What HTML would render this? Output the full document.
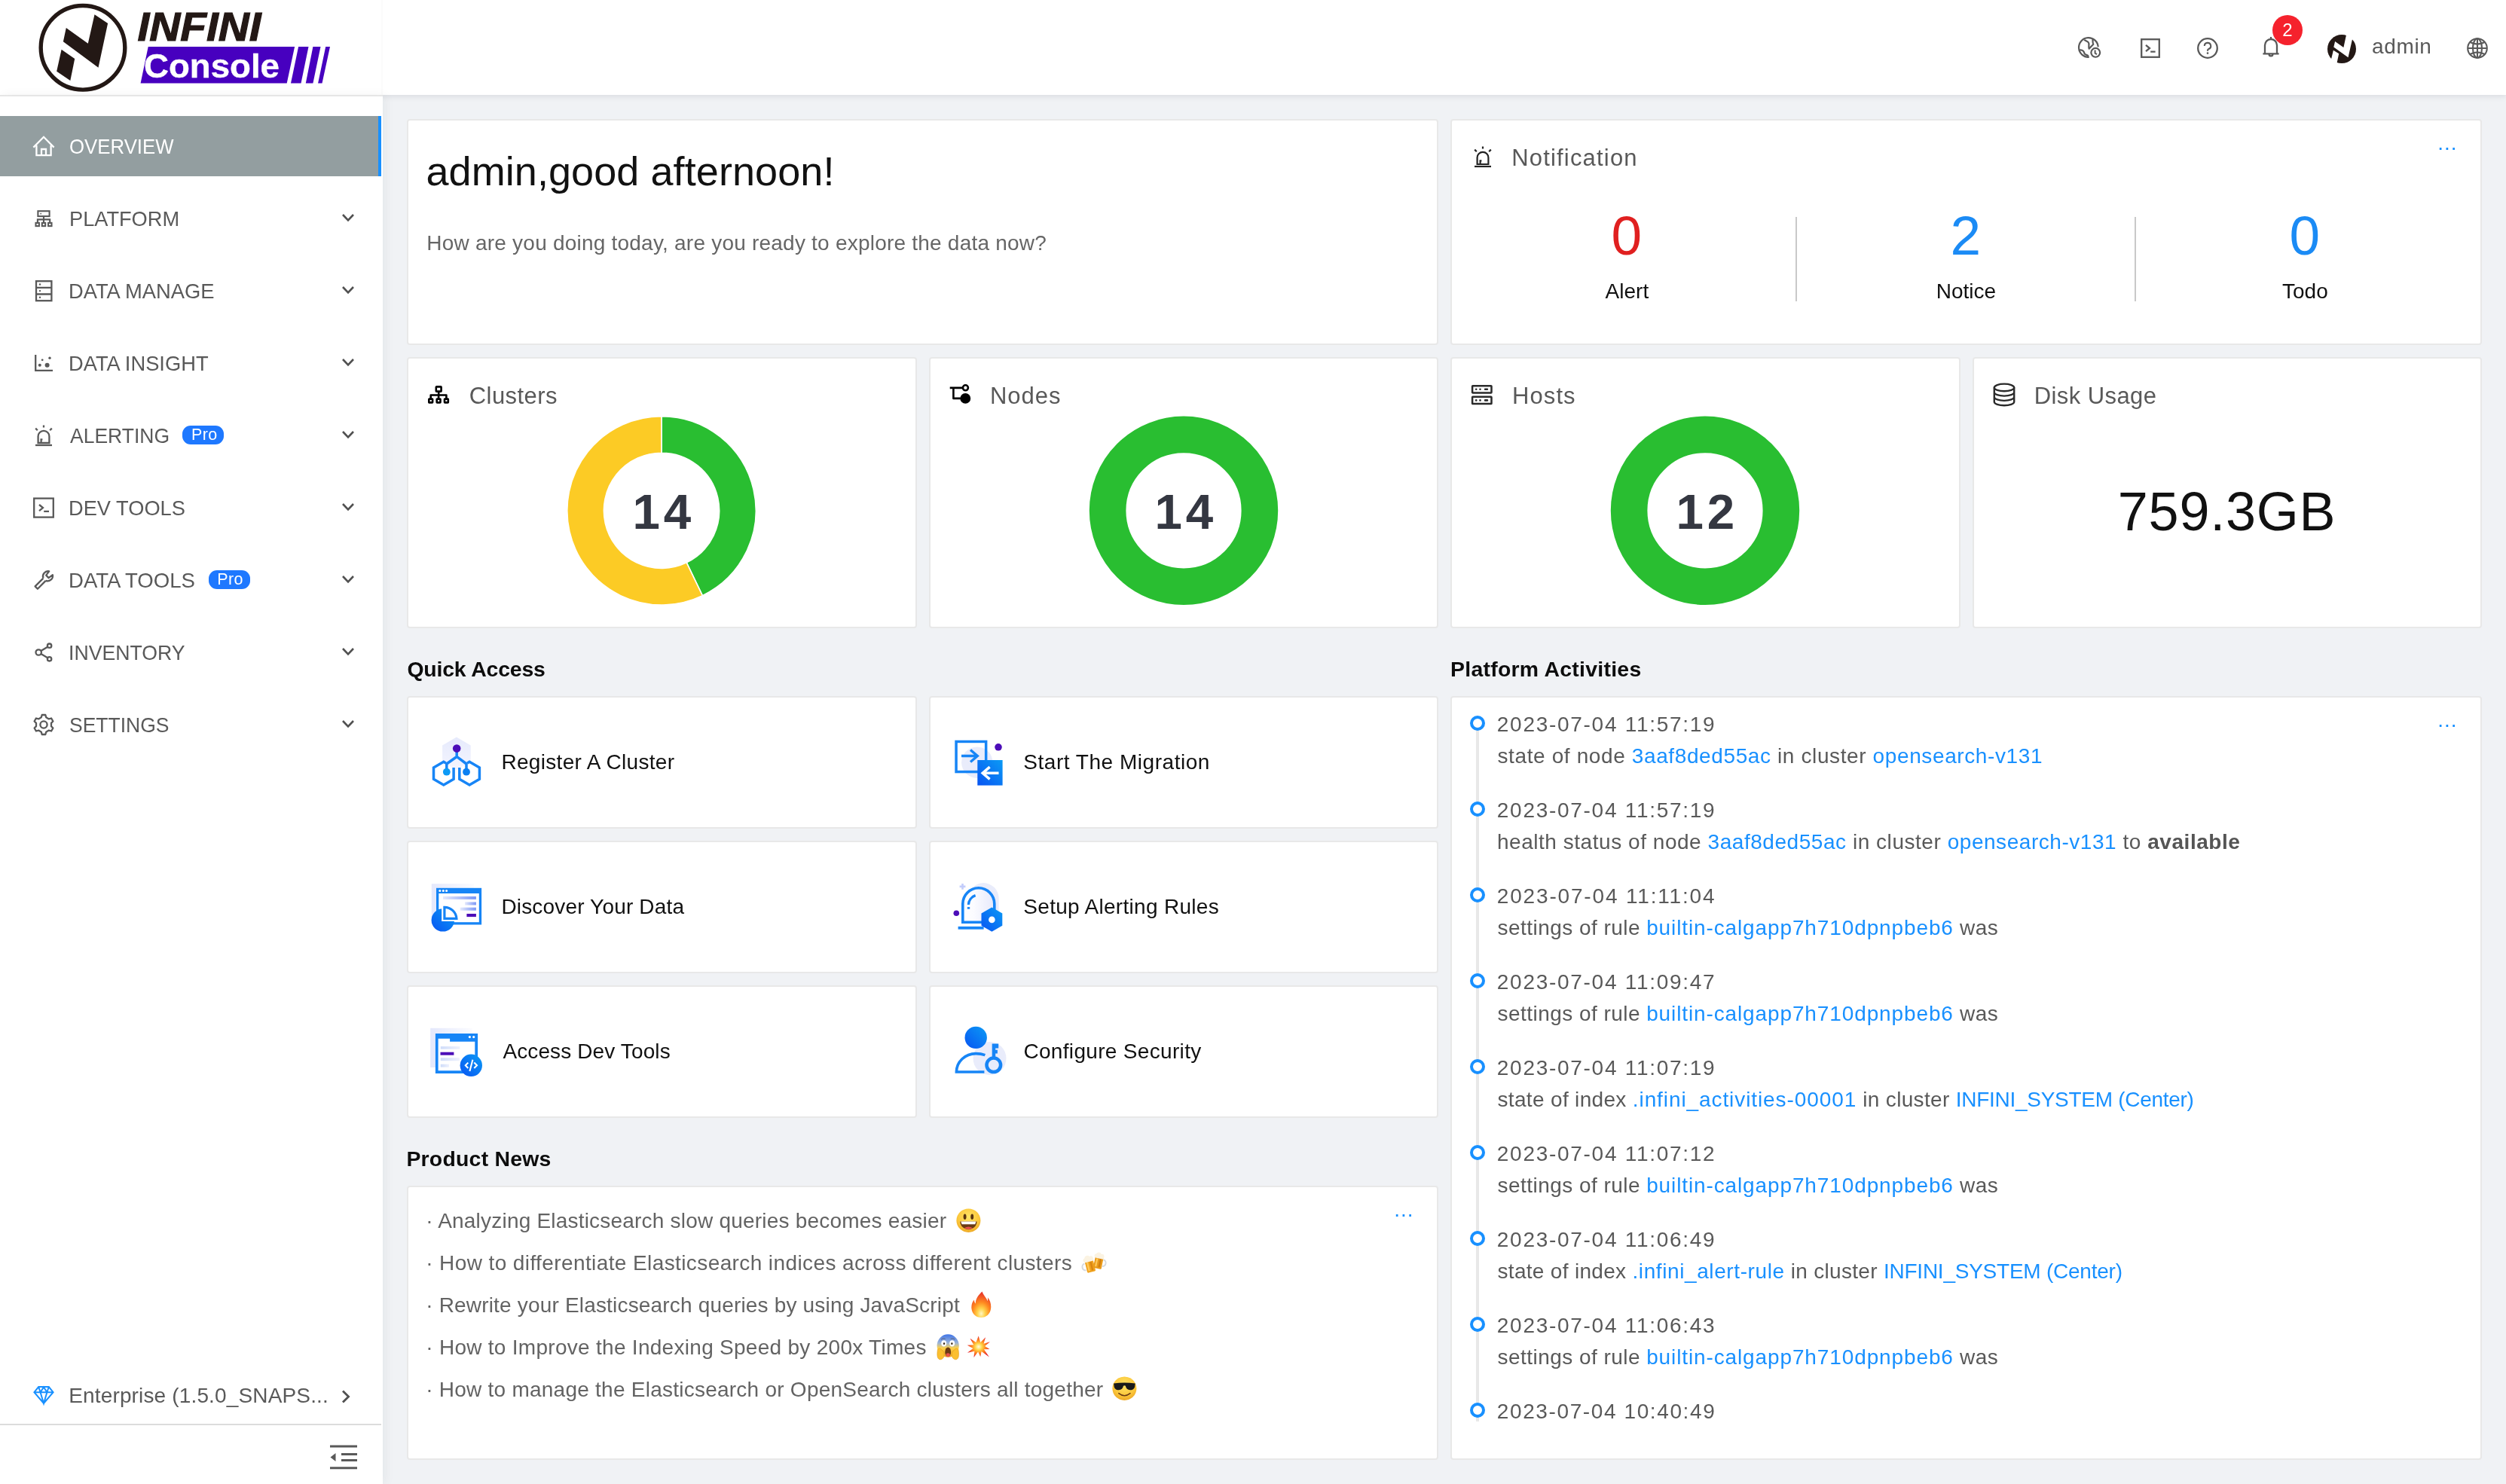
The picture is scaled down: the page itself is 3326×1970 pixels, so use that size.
<!DOCTYPE html>
<html lang="en">
<head>
<meta charset="utf-8">
<title>INFINI Console</title>
<style>
*{box-sizing:border-box;margin:0;padding:0}
html,body{width:3326px;height:1970px;overflow:hidden;background:#f0f2f5;font-family:"Liberation Sans","DejaVu Sans",sans-serif;color:#595959;font-size:28px}
.abs{position:absolute}
#head,#side,#main{will-change:transform}
#head{position:absolute;left:0;top:0;width:3326px;height:126px;background:#fff;box-shadow:0 2px 8px rgba(0,21,41,.10);z-index:5}
#side{position:absolute;left:0;top:126px;width:508px;height:1844px;background:#fff;box-shadow:4px 0 12px rgba(29,35,41,.05);z-index:6}
#logo{position:absolute;left:0;top:0;width:508px;height:126px;background:#fff;border-right:2px solid #fbfbfb}
#side::before{content:"";position:absolute;left:0;top:0;width:508px;height:2px;background:#e6e6e6}
.mi{position:absolute;left:0;width:506px;height:80px}
.mi.on{background:#939ea0;border-right:4px solid #1890ff;color:#fff}
.mi svg.ic{position:absolute;left:44px;top:26px;width:28px;height:28px;overflow:visible}
.mi .t{transform-origin:0 50%;position:absolute;left:93px;top:1px;line-height:80px;font-size:28px;white-space:nowrap;color:#595959}
.mi.on .t{color:#fff}
.mi svg.ch{position:absolute;left:453px;top:33px;width:18px;height:12px}
.pro{position:absolute;top:27.3px;width:55px;height:25.2px;line-height:25.6px;text-align:center;padding-left:3px;border-radius:11px;background:#1e78ff;color:#fff;font-size:21.5px;letter-spacing:0.4px}
.card{position:absolute;background:#fff;border:2px solid #e8e8e8;border-radius:4px}
.ct{position:absolute;left:80px;top:28px;font-size:32px;line-height:44px;color:#595959;white-space:nowrap}
.cic{position:absolute;left:24px;top:34px;width:32px;height:32px;overflow:visible}
.h2{position:absolute;font-size:28px;font-weight:700;color:#111;line-height:40px;white-space:nowrap}
.qa .qt{position:absolute;left:125px;top:0;line-height:172px;font-size:28px;color:#141414;white-space:nowrap}
.qa svg{position:absolute;left:30px;top:52px;width:70px;height:70px;overflow:visible}
a{color:#1890ff;text-decoration:none}
.more{font-size:28px;color:#1890ff;letter-spacing:0.97px}
.news{position:absolute;left:24px;font-size:28px;line-height:56px;color:#666;white-space:nowrap}
.em{display:inline-block;position:relative;width:36px;height:36px;vertical-align:middle;margin:-6px 0 0 6px;font-size:0}
.em svg{position:absolute;left:0;top:0;width:36px;height:36px;overflow:visible}
.tl{position:absolute;left:32px;width:1200px;height:114px}
.tl .dot{position:absolute;left:-8px;top:0;width:20px;height:20px;border:4px solid #1890ff;border-radius:50%;background:#fff}
.tl .ts{position:absolute;left:27px;top:-14px;line-height:44px;font-size:28px;letter-spacing:1.5px;color:#595959;white-space:nowrap}
.tl .tx{position:absolute;left:27px;top:28px;line-height:44px;font-size:28px;color:#595959;white-space:nowrap}
.tl b{color:#555}
.t1{position:absolute;line-height:1;white-space:nowrap}
.ctr{transform:translateX(-50%)}
.em2{position:absolute;font-size:0;line-height:0;overflow:visible}
.em2 svg{position:absolute;left:0;top:0;width:100%;height:100%;overflow:visible}
.dot{position:absolute;width:20px;height:20px;border:4px solid #1890ff;border-radius:50%;background:#fff}
.ts{font-size:28px;color:#595959;letter-spacing:1.5px}
.tx{font-size:28px;color:#595959}
.tx b{color:#555}
.nn{position:absolute;width:300px;text-align:center;font-size:72px;line-height:80px}
.nl{position:absolute;width:300px;text-align:center;font-size:28px;line-height:40px;color:#111}
</style>







<style id="fit">#w1{letter-spacing:0.080px;margin-left:-0.60px}#w2{letter-spacing:0.220px;margin-left:-0.20px}#n0{letter-spacing:1.182px;margin-left:-2.20px}#c0{letter-spacing:0.458px;margin-left:-0.80px}#c1{letter-spacing:1.000px;margin-left:-2.60px}#c2{letter-spacing:1.050px;margin-left:-1.40px}#c3{letter-spacing:0.420px;margin-left:-1.80px}#dsk{letter-spacing:0.733px;margin-left:-0.40px}#h1{letter-spacing:-0.162px;margin-left:-0.60px}#h2{letter-spacing:0.237px;margin-left:-1.60px}#h3{letter-spacing:0.278px;margin-left:-1.00px}#q0{letter-spacing:0.325px;margin-left:-1.90px}#q1{letter-spacing:0.528px;margin-left:-2.00px}#q2{letter-spacing:0.170px;margin-left:-1.90px}#q3{letter-spacing:0.300px;margin-left:-2.00px}#q4{letter-spacing:0.121px;margin-left:0.10px}#q5{letter-spacing:0.324px;margin-left:-1.90px}#p0{letter-spacing:0.206px;margin-left:-0.40px}#p1{letter-spacing:0.399px;margin-left:-0.40px}#p2{letter-spacing:0.178px;margin-left:-0.40px}#p3{letter-spacing:0.285px;margin-left:-0.40px}#p4{letter-spacing:0.243px;margin-left:-0.40px}#tx0{letter-spacing:0.613px;margin-left:-0.10px}#tx1{letter-spacing:0.541px;margin-left:-0.70px}#tx2{letter-spacing:0.457px;margin-left:-0.10px}#tx3{letter-spacing:0.457px;margin-left:-0.10px}#tx4{letter-spacing:0.332px;margin-left:-0.10px}#tx5{letter-spacing:0.457px;margin-left:-0.10px}#tx6{letter-spacing:0.307px;margin-left:-0.10px}#tx7{letter-spacing:0.457px;margin-left:-0.10px}#adm{letter-spacing:0.600px;margin-left:-0.90px}#ts0{letter-spacing:1.716px;margin-left:-0.20px}#ts1{letter-spacing:1.716px;margin-left:-0.20px}#ts2{letter-spacing:1.827px;margin-left:-0.20px}#ts3{letter-spacing:1.716px;margin-left:-0.20px}#ts4{letter-spacing:1.716px;margin-left:-0.20px}#ts5{letter-spacing:1.716px;margin-left:-0.20px}#ts6{letter-spacing:1.716px;margin-left:-0.20px}#ts7{letter-spacing:1.716px;margin-left:-0.20px}#ts8{letter-spacing:1.605px;margin-left:-0.20px}#ent{letter-spacing:0.152px;margin-left:-1.80px}#m0{transform:scaleX(0.9213);margin-left:-0.70px}#m1{transform:scaleX(0.9712);margin-left:-1.30px}#m2{transform:scaleX(0.9763);margin-left:-2.00px}#m3{transform:scaleX(0.9752);margin-left:-2.00px}#m4{transform:scaleX(0.9468);margin-left:-0.10px}#m5{transform:scaleX(0.9728);margin-left:-2.10px}#m6{transform:scaleX(0.9839);margin-left:-2.10px}#m7{transform:scaleX(0.9526);margin-left:-2.10px}#m8{transform:scaleX(0.9464);margin-left:-1.10px}</style>
</head>
<body>
<!-- SIDEBAR -->
<div id="side">
<div id="menu">
<div class="mi on" style="top:28px"><svg class="ic" viewBox="0 0 28 28" fill="none" stroke="#fff" color="#fff" stroke-width="2.3"><path d="M0.4,15.6 L14,1.8 L27.6,15.6"/><path d="M4.4,13 V26.2 H23.6 V13"/><path d="M11,26.2 V18 H17 V26.2"/></svg><span class="t" id="m0">OVERVIEW</span></div>
<div class="mi" style="top:124px"><svg class="ic" viewBox="0 0 28 28" fill="none" stroke="#595959" color="#595959" stroke-width="2.3"><g stroke-width="2.1"><rect x="6.4" y="4.2" width="15.2" height="6.9"/><circle cx="10.2" cy="7.7" r="0.9" fill="currentColor" stroke="none"/><path d="M14,11.2 V15.4 M5.9,19.6 V15.4 H22.2 V19.6 M14,15.4 V19.6"/><rect x="3.5" y="19.9" width="4.4" height="4.2"/><rect x="11.8" y="19.9" width="4.4" height="4.2"/><rect x="20.1" y="19.9" width="4.4" height="4.2"/></g></svg><span class="t" id="m1">PLATFORM</span><svg class="ch" viewBox="0 0 18 12" fill="none" stroke="#505050" stroke-width="2.6"><path d="M2,2 L9,9.4 L16,2"/></svg></div>
<div class="mi" style="top:220px"><svg class="ic" viewBox="0 0 28 28" fill="none" stroke="#595959" color="#595959" stroke-width="2.3"><rect x="4" y="1.2" width="20.4" height="26"/><path d="M4,9.8 H24.4 M4,18.5 H24.4"/><circle cx="9" cy="5.5" r="1.2" fill="currentColor" stroke="none"/><circle cx="9" cy="14.1" r="1.2" fill="currentColor" stroke="none"/><circle cx="9" cy="22.8" r="1.2" fill="currentColor" stroke="none"/></svg><span class="t" id="m2">DATA MANAGE</span><svg class="ch" viewBox="0 0 18 12" fill="none" stroke="#505050" stroke-width="2.6"><path d="M2,2 L9,9.4 L16,2"/></svg></div>
<div class="mi" style="top:316px"><svg class="ic" viewBox="0 0 28 28" fill="none" stroke="#595959" color="#595959" stroke-width="2.3"><path d="M3.2,3 V23.8 H26"/><g fill="currentColor" stroke="none"><circle cx="8.8" cy="16.8" r="2"/><circle cx="12.2" cy="9.8" r="1.4"/><circle cx="18.6" cy="16.8" r="3"/><circle cx="22" cy="7.2" r="1.7"/></g></svg><span class="t" id="m3">DATA INSIGHT</span><svg class="ch" viewBox="0 0 18 12" fill="none" stroke="#505050" stroke-width="2.6"><path d="M2,2 L9,9.4 L16,2"/></svg></div>
<div class="mi" style="top:412px"><svg class="ic" viewBox="0 0 28 28" fill="none" stroke="#595959" color="#595959" stroke-width="2.3"><path d="M6.6,24 V15.2 a7.4,7.4 0 0 1 14.8,0 V24 Z"/><path d="M3,27 H25"/><path d="M10.6,24 V19.4 H12.4"/><path d="M14,0.6 V3.6 M3.2,4.6 L5.8,7.2 M24.8,4.6 L22.2,7.2"/></svg><span class="t" id="m4">ALERTING</span><span class="pro" style="left:242.4px">Pro</span><svg class="ch" viewBox="0 0 18 12" fill="none" stroke="#505050" stroke-width="2.6"><path d="M2,2 L9,9.4 L16,2"/></svg></div>
<div class="mi" style="top:508px"><svg class="ic" viewBox="0 0 28 28" fill="none" stroke="#595959" color="#595959" stroke-width="2.3"><rect x="1.2" y="1.6" width="25.6" height="25"/><path d="M8,10 L13,14.1 L8,18.2 M14.2,18.8 H21"/></svg><span class="t" id="m5">DEV TOOLS</span><svg class="ch" viewBox="0 0 18 12" fill="none" stroke="#505050" stroke-width="2.6"><path d="M2,2 L9,9.4 L16,2"/></svg></div>
<div class="mi" style="top:604px"><svg class="ic" viewBox="0 0 28 28" fill="none" stroke="#595959" color="#595959" stroke-width="2.3"><path d="M13.4,11.6 L2.6,22.4 L5.9,25.7 L16.7,14.9 M13.4,11.6 A6.9,6.9 0 0 1 21.2,2.4 L17.2,7.6 L20.6,11.2 L25.9,7.2 A6.9,6.9 0 0 1 16.7,14.9" stroke-linejoin="round"/></svg><span class="t" id="m6">DATA TOOLS</span><span class="pro" style="left:276.6px">Pro</span><svg class="ch" viewBox="0 0 18 12" fill="none" stroke="#505050" stroke-width="2.6"><path d="M2,2 L9,9.4 L16,2"/></svg></div>
<div class="mi" style="top:700px"><svg class="ic" viewBox="0 0 28 28" fill="none" stroke="#595959" color="#595959" stroke-width="2.3"><circle cx="21.6" cy="5.2" r="2.7"/><circle cx="7.2" cy="14" r="3.7"/><circle cx="21.6" cy="22.8" r="2.7"/><path d="M10.4,12.1 L19.2,6.7 M10.4,15.9 L19.2,21.3"/></svg><span class="t" id="m7">INVENTORY</span><svg class="ch" viewBox="0 0 18 12" fill="none" stroke="#505050" stroke-width="2.6"><path d="M2,2 L9,9.4 L16,2"/></svg></div>
<div class="mi" style="top:796px"><svg class="ic" viewBox="0 0 28 28" fill="none" stroke="#595959" color="#595959" stroke-width="2.3"><path d="M11.7,1.0 L16.3,1.0 L17.2,4.3 L20.8,6.4 L24.1,5.5 L26.4,9.5 L24.0,11.9 L24.0,16.1 L26.4,18.5 L24.1,22.5 L20.8,21.6 L17.2,23.7 L16.3,27.0 L11.7,27.0 L10.8,23.7 L7.2,21.6 L3.9,22.5 L1.6,18.5 L4.0,16.1 L4.0,11.9 L1.6,9.5 L3.9,5.5 L7.2,6.4 L10.8,4.3Z" stroke-linejoin="round"/><circle cx="14" cy="14" r="4.6"/></svg><span class="t" id="m8">SETTINGS</span><svg class="ch" viewBox="0 0 18 12" fill="none" stroke="#505050" stroke-width="2.6"><path d="M2,2 L9,9.4 L16,2"/></svg></div>
<div class="abs" style="left:0;top:1686px;width:506px;height:80px">
<svg class="abs" style="left:44px;top:27px;overflow:visible" width="28" height="26" viewBox="0 0 28 26" fill="none" stroke="#1890ff" stroke-width="2"><path d="M7.2,2 H20.8 L26.6,9.2 L14,24 L1.4,9.2 Z M1.4,9.2 H26.6 M7.2,2 L9.6,9.2 L14,24 L18.4,9.2 L20.8,2 M9.6,9.2 L14,2.4 L18.4,9.2"/></svg>
<span class="abs" style="left:93px;top:0;line-height:82px;font-size:28px;color:#595959;white-space:nowrap" id="ent">Enterprise (1.5.0_SNAPS...</span>
<svg class="abs" style="left:452px;top:32px" width="14" height="20" viewBox="0 0 14 20" fill="none" stroke="#505050" stroke-width="2.8"><path d="M3,2.4 L10.6,10 L3,17.6"/></svg>
</div>
<div class="abs" style="left:0;top:1764px;width:506px;height:2px;background:#dcdcdc"></div>
<svg class="abs" style="left:436px;top:1790px" width="40" height="36" viewBox="0 0 40 36" fill="none" stroke="#595959" stroke-width="3"><path d="M2,4 H38 M17,14.5 H38 M17,22.5 H38 M2,32.8 H38"/><path d="M2.5,18.5 L9.5,13 V24 Z" fill="#595959" stroke="none"/></svg>
</div>
</div>
<!-- HEADER -->
<div id="head">
<div id="hicons">
<svg class="abs" style="left:2757px;top:48px;overflow:visible" width="34" height="32" viewBox="0 0 34 32" fill="none" stroke="#595959" stroke-width="2.2" stroke-linejoin="round"><path d="M27.7,14.2 A12.85,12.85 0 1 0 15.6,27.8"/><path d="M9.2,4.7 C11,6.6 13.2,6.6 14.7,8.2 C16.4,10.4 14.6,13.6 15.6,16.7 L21.3,10.7 C20,8.4 20.8,6 20.4,3.6"/><path d="M2.6,18.6 C4.6,18 6.6,18.4 7.9,19.7 C9.4,21.2 8.8,23 10.5,24.1 C11.8,25 13.4,24.8 14.3,26.1 C14.8,26.9 14.2,27.6 13.6,28.4"/><circle cx="24.25" cy="21.85" r="5.9" fill="#fff"/><path d="M23.6,18.6 V22.6 L26,24.2" stroke-width="2"/></svg>
<svg class="abs" style="left:2841px;top:51px;overflow:visible" width="26" height="26" viewBox="0 0 26 26" fill="none" stroke="#595959" stroke-width="2.3"><rect x="1.2" y="1.2" width="23.6" height="23.6"/><path d="M7,8.8 L12,13 L7,17.2 M13.2,17.6 H19.6"/></svg>
<svg class="abs" style="left:2916px;top:50px;overflow:visible" width="28" height="28" viewBox="0 0 28 28" fill="none" stroke="#595959" stroke-width="2.3"><circle cx="14" cy="14" r="12.8"/><path d="M9.8,11 a4.2,4.2 0 1 1 5.6,4 c-1,0.4 -1.4,1 -1.4,2 v0.8" stroke-width="2.1"/><circle cx="14" cy="20.6" r="1.3" fill="#595959" stroke="none"/></svg>
<svg class="abs" style="left:3002px;top:48px;overflow:visible" width="24" height="28" viewBox="0 0 24 28" fill="none" stroke="#595959" stroke-width="2.3"><path d="M12,1 V3.4 M1.4,23.4 H22.6 M4,23.4 V12 a8,8 0 0 1 16,0 V23.4"/><path d="M9.6,24 a2.4,2.4 0 0 0 4.8,0" /></svg>
<div class="abs" style="left:3016px;top:20px;width:40px;height:40px;border-radius:20px;background:#f5222d;color:#fff;font-size:24px;line-height:40px;text-align:center">2</div>
<svg class="abs" style="left:3089px;top:46px;overflow:visible" width="38" height="38" viewBox="0 0 38 38"><circle cx="19" cy="19.1" r="19" fill="#231815"/><polygon fill="#fff" points="25.3,-1 21.4,17 10.1,8.9 8.3,16.6 27.5,30.3 32.8,7 36,-1"/><polygon fill="#fff" points="7.9,20.8 15.2,25.3 12.3,39 3.4,39"/></svg>
<span class="abs" id="adm" style="left:3149px;top:42px;font-size:28px;line-height:40px;color:#595959">admin</span>
<svg class="abs" style="left:3274px;top:50px;overflow:visible" width="28" height="28" viewBox="0 0 28 28" fill="none" stroke="#595959" stroke-width="2.1"><circle cx="14" cy="14" r="12.8"/><ellipse cx="14" cy="14" rx="6" ry="12.8"/><path d="M14,1.2 V26.8 M1.2,14 H26.8 M4.4,6 Q14,11.2 23.6,6 M4.4,22 Q14,16.8 23.6,22"/></svg>
</div>
<div id="logo">
<svg class="abs" style="left:0;top:0" width="508" height="126" viewBox="0 0 508 126">
<circle cx="110" cy="63.3" r="55.8" fill="#fff" stroke="#231815" stroke-width="5.4"/>
<polygon fill="#231815" points="125.5,19.3 143.1,31 130.5,89.7 83.9,55.3 87.8,36.9 116.8,57.8"/>
<polygon fill="#231815" points="81.6,65.7 99.2,77.9 93.3,106.9 75.2,94.7"/>
<text x="182.5" y="54.2" font-family="Liberation Sans, sans-serif" font-weight="700" font-style="italic" font-size="53" fill="#231815" stroke="#231815" stroke-width="1.2" textLength="164" lengthAdjust="spacingAndGlyphs">INFINI</text>
<polygon fill="#4700bf" points="196.7,62 391.1,62 380.7,110.6 186.6,110.6"/>
<polygon fill="#4700bf" points="396.1,62 409.5,62 399.5,110.6 386,110.6"/>
<polygon fill="#4700bf" points="415.4,62 425.5,62 415.4,110.6 405.8,110.6"/>
<polygon fill="#4700bf" points="432.2,62 438,62 427.5,110.6 422.1,110.6"/>
<text x="191" y="103" font-family="Liberation Sans, sans-serif" font-weight="700" font-size="45" fill="#fff" stroke="#fff" stroke-width="0.4" textLength="180" lengthAdjust="spacingAndGlyphs">Console</text>
</svg>
</div>
</div>
<!-- MAIN -->
<div id="main">
<div class="card" style="left:540px;top:158px;width:1369px;height:300px">
<span class="t1" id="w1" style="left:24.0px;top:40.3px;font-size:54px;color:#111;font-weight:400;">admin,good afternoon!</span>
<span class="t1" id="w2" style="left:24.5px;top:148.9px;font-size:28px;color:#666;font-weight:400;">How are you doing today, are you ready to explore the data now?</span>
</div>
<div class="card" style="left:1925px;top:158px;width:1369px;height:300px">
<svg class="abs" style="left:27px;top:34px;overflow:visible" width="28" height="28" viewBox="0 0 28 28" fill="none" stroke="#222" stroke-width="2.2"><path d="M6.6,24 V15.2 a7.4,7.4 0 0 1 14.8,0 V24 Z"/><path d="M3,27 H25"/><path d="M10.6,24 V19.4 H12.4"/><path d="M14,0.6 V3.6 M3.2,4.6 L5.8,7.2 M24.8,4.6 L22.2,7.2"/></svg>
<span class="t1" id="n0" style="left:81.4px;top:33.7px;font-size:31px;color:#595959;font-weight:400;">Notification</span>
<span class="t1 more" style="left:1308.3px;top:15.7px">...</span>
<span class="t1 ctr" id="nn0" style="left:231.8px;top:116.4px;font-size:73px;color:#e02020">0</span>
<span class="t1 ctr" id="nl0" style="left:232.4px;top:212.8px;font-size:28px;color:#111">Alert</span>
<span class="t1 ctr" id="nn1" style="left:681.8px;top:116.4px;font-size:73px;color:#1b8bf5">2</span>
<span class="t1 ctr" id="nl1" style="left:682.4px;top:212.8px;font-size:28px;color:#111">Notice</span>
<span class="t1 ctr" id="nn2" style="left:1131.8px;top:116.4px;font-size:73px;color:#1b8bf5">0</span>
<span class="t1 ctr" id="nl2" style="left:1132.4px;top:212.8px;font-size:28px;color:#111">Todo</span>
<div class="abs" style="left:456.3px;top:128px;width:2px;height:112px;background:#c9c9c9"></div>
<div class="abs" style="left:906.3px;top:128px;width:2px;height:112px;background:#c9c9c9"></div>
</div>
<div class="card" style="left:540px;top:474px;width:677px;height:360px">
<svg class="abs" style="left:24px;top:34px;overflow:visible" width="32" height="32" viewBox="0 0 32 32" fill="none" stroke="#000" stroke-width="2.6" stroke-linejoin="round"><rect x="12.8" y="3.4" width="6.8" height="6.2" rx="0.6"/><path d="M16.2,9.8 V14.5 M5.7,19.4 V14.5 H26.4 V19.4 M16.1,14.5 V19.4"/><rect x="3.3" y="19.6" width="4.8" height="4.8" rx="0.5"/><rect x="13.7" y="19.6" width="4.8" height="4.8" rx="0.5"/><rect x="24" y="19.6" width="4.8" height="4.8" rx="0.5"/></svg>
<span class="t1" id="c0" style="left:81.5px;top:33.7px;font-size:31px;color:#595959;font-weight:400;">Clusters</span>
<svg class="abs" style="left:0;top:0" width="672" height="356" viewBox="0 0 672 356"><path d="M336.00,76.60 A125.2,125.2 0 0 1 390.32,314.60 L369.24,270.81 A76.6,76.6 0 0 0 336.00,125.20 Z" fill="#29be31" stroke="#fff" stroke-width="1.6"/><path d="M390.32,314.60 A125.2,125.2 0 1 1 336.00,76.60 L336.00,125.20 A76.6,76.6 0 1 0 369.24,270.81 Z" fill="#fccb25" stroke="#fff" stroke-width="1.6"/></svg>
<span class="t1 ctr" id="d0" style="left:338.8px;top:171.4px;font-size:65.5px;font-weight:700;color:#343741;letter-spacing:4.9px">14</span>
</div>
<div class="card" style="left:1233px;top:474px;width:676px;height:360px">
<svg class="abs" style="left:24px;top:34px;overflow:visible" width="32" height="32" viewBox="0 0 32 32" fill="none" stroke="#000" stroke-width="2.6" stroke-linejoin="round"><path d="M1.7,4.9 H18.8 M6.4,4.9 V18.9 H16"/><circle cx="22.4" cy="4.8" r="3.5"/><circle cx="22.3" cy="18.9" r="6.9" fill="#000" stroke="none"/></svg>
<span class="t1" id="c1" style="left:81.5px;top:33.7px;font-size:31px;color:#595959;font-weight:400;">Nodes</span>
<svg class="abs" style="left:0;top:0" width="672" height="356" viewBox="0 0 672 356"><circle cx="336" cy="201.8" r="100.9" fill="none" stroke="#29be31" stroke-width="48.6"/></svg>
<span class="t1 ctr" id="d1" style="left:338.8px;top:171.4px;font-size:65.5px;font-weight:700;color:#343741;letter-spacing:4.9px">14</span>
</div>
<div class="card" style="left:1925px;top:474px;width:677px;height:360px">
<svg class="abs" style="left:24px;top:34px;overflow:visible" width="32" height="32" viewBox="0 0 32 32" fill="none" stroke="#2a2a2a" stroke-width="2.5" stroke-linejoin="round"><rect x="3.1" y="2.2" width="25.4" height="9.2" rx="0.6"/><rect x="3.1" y="16.8" width="25.4" height="9.2" rx="0.6"/><g fill="#2a2a2a" stroke="none"><circle cx="8.2" cy="6.7" r="1.3"/><circle cx="13.5" cy="6.7" r="1.3"/><rect x="18.8" y="5.4" width="5.4" height="2.6" rx="1.3"/><circle cx="8.2" cy="21.4" r="1.3"/><circle cx="13.5" cy="21.4" r="1.3"/><rect x="18.8" y="20.1" width="5.4" height="2.6" rx="1.3"/></g></svg>
<span class="t1" id="c2" style="left:81.5px;top:33.7px;font-size:31px;color:#595959;font-weight:400;">Hosts</span>
<svg class="abs" style="left:0;top:0" width="672" height="356" viewBox="0 0 672 356"><circle cx="336" cy="201.8" r="100.9" fill="none" stroke="#29be31" stroke-width="48.6"/></svg>
<span class="t1 ctr" id="d2" style="left:338.8px;top:171.4px;font-size:65.5px;font-weight:700;color:#343741;letter-spacing:4.9px">12</span>
</div>
<div class="card" style="left:2618px;top:474px;width:676px;height:360px">
<svg class="abs" style="left:24px;top:31px;overflow:visible" width="32" height="32" viewBox="0 0 32 32" fill="none" stroke="#2a2a2a" stroke-width="2.4" stroke-linejoin="round"><ellipse cx="16" cy="7.4" rx="13.2" ry="4.8"/><path d="M2.8,7.4 V26.4 a13.2,4.8 0 0 0 26.4,0 V7.4 M2.8,13.8 a13.2,4.8 0 0 0 26.4,0 M2.8,20.1 a13.2,4.8 0 0 0 26.4,0"/></svg>
<span class="t1" id="c3" style="left:81.5px;top:33.7px;font-size:31px;color:#595959;font-weight:400;">Disk Usage</span>
<span class="t1 ctr" id="dsk" style="left:335.9px;top:167.2px;font-size:72px;color:#111">759.3GB</span>
</div>
<svg width="0" height="0" style="position:absolute"><defs>
<linearGradient id="gb" x1="1" y1="0" x2="0" y2="1"><stop offset="0" stop-color="#0b9bf5"/><stop offset="1" stop-color="#0854f2"/></linearGradient>
<linearGradient id="gl" x1="0" y1="0" x2="1" y2="0"><stop offset="0" stop-color="#e4e8fc"/><stop offset="1" stop-color="#e4e8fc" stop-opacity="0.15"/></linearGradient>
<linearGradient id="gbar" x1="0" y1="0" x2="1" y2="0"><stop offset="0" stop-color="#e6eafc"/><stop offset="1" stop-color="#7896f6"/></linearGradient>
<linearGradient id="gbar2" x1="0" y1="0" x2="1" y2="0"><stop offset="0" stop-color="#cfdcf9"/><stop offset="1" stop-color="#eef1fd"/></linearGradient>
<linearGradient id="gdome" x1="0" y1="0" x2="1" y2="0"><stop offset="0" stop-color="#fff"/><stop offset="0.35" stop-color="#fbfbff"/><stop offset="1" stop-color="#e6e9fb"/></linearGradient>
<linearGradient id="ghex" x1="0" y1="0" x2="0" y2="1"><stop offset="0" stop-color="#e6eafc"/><stop offset="1" stop-color="#f4f5fe"/></linearGradient>
<radialGradient id="gf" cx="0.5" cy="0.35" r="0.75"><stop offset="0" stop-color="#ffe566"/><stop offset="0.6" stop-color="#fbc63a"/><stop offset="1" stop-color="#e69a1c"/></radialGradient>
<linearGradient id="gscr" x1="0" y1="0" x2="0" y2="1"><stop offset="0" stop-color="#3f74e8"/><stop offset="0.38" stop-color="#9bb4d8"/><stop offset="0.6" stop-color="#fcd04a"/><stop offset="1" stop-color="#f2ab25"/></linearGradient>
<radialGradient id="gfire" cx="0.5" cy="0.85" r="0.8"><stop offset="0" stop-color="#fff7c2"/><stop offset="0.25" stop-color="#ffd24a"/><stop offset="0.55" stop-color="#ff8a1f"/><stop offset="1" stop-color="#e8352a"/></radialGradient>
<radialGradient id="gboom" cx="0.5" cy="0.5" r="0.5"><stop offset="0" stop-color="#fffbe0"/><stop offset="0.3" stop-color="#ffd84a"/><stop offset="0.6" stop-color="#ff8a1f"/><stop offset="1" stop-color="#e8262d"/></radialGradient></defs></svg>
<span class="t1" id="h1" style="left:541px;top:874.3px;font-size:28.4px;font-weight:700;color:#0d0d0d">Quick Access</span>
<div class="card qa" style="left:540px;top:924px;width:677px;height:176px">
<svg viewBox="0 0 70 70"><polygon points="33.9,0.6 52.7,11.4 52.7,33.1 33.9,44.0 15.1,33.2 15.1,11.4" fill="url(#ghex)"/>
<path d="M34.2,18 V26.6 M34.6,26.2 L20.8,36 V46 M33.8,26.2 L47,36 V46" fill="none" stroke="#1785f6" stroke-width="3.5"/>
<path d="M30.1,41.0 L30.1,56.2 L16.8,63.9 L3.5,56.3 L3.5,41.0 L16.8,33.3 L19.7,35.0" fill="none" stroke="#1785f6" stroke-width="3.5"/><path d="M37.8,41.0 L37.8,56.3 L51.1,63.9 L64.4,56.2 L64.4,41.0 L51.1,33.3 L48.2,35.0" fill="none" stroke="#1785f6" stroke-width="3.5"/>
<circle cx="20.8" cy="46.7" r="4.9" fill="#0d9af6"/><circle cx="47" cy="46.7" r="4.9" fill="#0a80f2"/>
<circle cx="34.2" cy="15.6" r="5.3" fill="#4c0db8"/></svg>
<span class="t1" id="q0" style="left:125.3px;top:72.4px;font-size:28px;color:#111">Register A Cluster</span>
</div>
<div class="card qa" style="left:1233px;top:924px;width:676px;height:176px">
<svg viewBox="0 0 70 70"><circle cx="31.8" cy="34.2" r="20.7" fill="#e9ecfb"/>
<rect x="4.05" y="6.45" width="39.6" height="40.1" fill="none" stroke="#1785f6" stroke-width="3.5"/>
<path d="M11,25.5 H32 M23,17.4 L32.4,25.5 L23,33.6" fill="none" stroke="#1785f6" stroke-width="3.3"/>
<rect x="32.3" y="31" width="33.3" height="33.6" fill="url(#gb)"/>
<path d="M60.5,48.3 H39.6 M48.6,40.2 L39.2,48.3 L48.6,56.4" fill="none" stroke="#fff" stroke-width="3.5"/>
<circle cx="60" cy="13.8" r="4.8" fill="#4c0db8"/></svg>
<span class="t1" id="q1" style="left:125.3px;top:72.4px;font-size:28px;color:#111">Start The Migration</span>
</div>
<div class="card qa" style="left:540px;top:1116px;width:677px;height:176px">
<svg viewBox="0 0 70 70"><rect x="0.8" y="3.2" width="56" height="50" fill="url(#gl)"/>
<rect x="7" y="8.8" width="60.1" height="48.7" fill="#1785f6"/><rect x="10.3" y="16" width="53.5" height="38.2" fill="#fff"/>
<circle cx="11.8" cy="12.5" r="1.5" fill="#fff"/><circle cx="16.3" cy="12.5" r="1.5" fill="#fff"/><circle cx="20.6" cy="12.5" r="1.5" fill="#fff"/>
<rect x="16" y="20" width="43.9" height="3.9" fill="url(#gbar)"/><rect x="45" y="27.5" width="14.9" height="4" fill="url(#gbar)"/><rect x="38.7" y="34.7" width="21.2" height="4" fill="url(#gbar)"/><rect x="47.4" y="43" width="12.5" height="4.1" fill="#4c0db8"/>
<circle cx="15.8" cy="51.4" r="15.2" fill="url(#gb)"/>
<path d="M17.9,34.3 V49.3 H33.9 A16,16 0 0 0 17.9,34.3 Z" fill="#fff" stroke="#fff" stroke-width="7.5"/>
<path d="M17.9,34.3 V49.3 H33.9 A16,16 0 0 0 17.9,34.3 Z" fill="#fff" stroke="#1785f6" stroke-width="3.2"/></svg>
<span class="t1" id="q2" style="left:125.3px;top:72.4px;font-size:28px;color:#111">Discover Your Data</span>
</div>
<div class="card qa" style="left:1233px;top:1116px;width:676px;height:176px">
<svg viewBox="0 0 70 70"><path d="M19.8,44 V22.5 a20.4,20.4 0 0 1 40.8,0 V44 Z" fill="#e9ecfb"/>
<path d="M8.6,5.6 h2.6 v-2.6 h2.6 v2.6 h2.6 v2.6 h-2.6 v2.6 h-2.6 v-2.6 h-2.6 z" fill="#c3cdfb"/>
<path d="M12.8,54.2 V29.8 a21,21 0 0 1 42,0 V54.2 Z" fill="url(#gdome)" stroke="#1785f6" stroke-width="3.6"/>
<path d="M20.4,31 A13.6,13.6 0 0 1 29.6,18.6" fill="none" stroke="#1785f6" stroke-width="3.3"/><path d="M18.8,35.4 H22.2" stroke="#1785f6" stroke-width="2.6"/>
<rect x="6.6" y="59.9" width="34" height="3.8" fill="#1785f6"/>
<polygon points="51.4,34.6 65.3,42.6 65.3,58.8 51.4,66.8 37.5,58.8 37.5,42.6" fill="url(#gb)"/><circle cx="51.4" cy="50.9" r="4.3" fill="#fff"/>
<circle cx="4.3" cy="42.3" r="3.8" fill="#4c0db8"/></svg>
<span class="t1" id="q3" style="left:125.3px;top:72.4px;font-size:28px;color:#111">Setup Alerting Rules</span>
</div>
<div class="card qa" style="left:540px;top:1308px;width:677px;height:176px">
<svg viewBox="0 0 70 70"><rect x="-0.8" y="2.8" width="55.4" height="52.2" fill="url(#gl)"/>
<rect x="5.9" y="10" width="56.2" height="53" fill="#1785f6"/>
<path d="M9.6,16.7 H25.1 V20.7 H58.3 V59.3 H9.6 Z" fill="#fff"/>
<circle cx="51.4" cy="14.6" r="1.6" fill="#fff"/><circle cx="56.7" cy="14.6" r="1.6" fill="#fff"/>
<rect x="12.8" y="27.1" width="25.5" height="3.6" fill="url(#gbar2)"/><rect x="12.5" y="34.7" width="17.9" height="4" fill="#4c0db8"/><rect x="12.8" y="42.2" width="25.1" height="4" fill="url(#gbar2)"/><rect x="12.8" y="50.7" width="11.2" height="4" fill="url(#gbar2)"/>
<circle cx="53.3" cy="52.3" r="14.7" fill="url(#gb)"/>
<path d="M49.3,48.6 L45.8,52.3 L49.3,56 M55.4,44.8 L51.4,59.9 M57.3,48.6 L61,52.3 L57.3,56" fill="none" stroke="#fff" stroke-width="2.1"/></svg>
<span class="t1" id="q4" style="left:125.3px;top:72.4px;font-size:28px;color:#111">Access Dev Tools</span>
</div>
<div class="card qa" style="left:1233px;top:1308px;width:676px;height:176px">
<svg viewBox="0 0 70 70"><circle cx="48.5" cy="43" r="22" fill="#e9ecfb"/>
<circle cx="30.2" cy="15.4" r="14.7" fill="url(#gb)"/>
<path d="M4.4,61 A25.8,24.4 0 0 1 30.2,36.6 Q37,36.6 42.4,38.6 M2.6,61 H41.4" fill="none" stroke="#1785f6" stroke-width="3.6"/>
<circle cx="53.8" cy="51.8" r="9.3" fill="#e9ecfb" stroke="#1785f6" stroke-width="4.5"/>
<path d="M51.7,42.8 V23.4 H60.2 V29.5 H56.2 V31.8 H58.9 V36.6 H56.2 V42.8 Z" fill="#1785f6"/></svg>
<span class="t1" id="q5" style="left:125.3px;top:72.4px;font-size:28px;color:#111">Configure Security</span>
</div>
<span class="t1" id="h2" style="left:541px;top:1524.3px;font-size:28.4px;font-weight:700;color:#0d0d0d">Product News</span>
<div class="card" style="left:540px;top:1574px;width:1369px;height:364px">
<span class="t1" id="p0" style="left:23.6px;top:31.4px;font-size:28px;color:#636363">· Analyzing Elasticsearch slow queries becomes easier</span>
<span class="em2" style="left:726.9px;top:27.6px;width:32.8px;height:32.4px">😃<svg viewBox="0 0 32 32" preserveAspectRatio="none"><circle cx="16" cy="16" r="15.6" fill="url(#gf)"/><ellipse cx="11.3" cy="11" rx="1.9" ry="3.7" fill="#5a3410"/><ellipse cx="20.7" cy="11" rx="1.9" ry="3.7" fill="#5a3410"/><path d="M5.2,17.2 H26.8 A10.8,10.6 0 0 1 5.2,17.2 Z" fill="#6b3a12"/><path d="M6.2,17.2 H25.8 L24.6,21 H7.4 Z" fill="#fff"/><path d="M10.5,26 Q16,22.6 21.5,26 Q16,29.2 10.5,26 Z" fill="#e8524a"/></svg></span>
<span class="t1" id="p1" style="left:23.6px;top:87.4px;font-size:28px;color:#636363">· How to differentiate Elasticsearch indices across different clusters</span>
<span class="em2" style="left:895.1px;top:85.5px;width:29px;height:29.5px">🍻<svg viewBox="0 0 32 32" preserveAspectRatio="none"><g transform="rotate(-14 11 19)"><path d="M3.4,15 a4.4,4.8 0 0 0 0,9.6" fill="none" stroke="#d5d9de" stroke-width="2.2"/><rect x="4.4" y="11" width="12.4" height="18" rx="1.6" fill="#f0a21d"/><rect x="6.4" y="14" width="2.6" height="13" fill="#ffc95a"/><rect x="11.4" y="14" width="2.6" height="13" fill="#d98512"/><path d="M3.4,12.6 a3,3 0 0 1 1.6,-5.2 a4.4,4.4 0 0 1 8,-0.8 a3.2,3.2 0 0 1 4.6,3.6 a2.6,2.6 0 0 1 -1,3.6 H5 Z" fill="#fbf3e2"/></g><g transform="rotate(12 23 15)"><path d="M29.6,10 a4.2,4.6 0 0 1 0,9.2" fill="none" stroke="#d5d9de" stroke-width="2.2"/><rect x="17" y="6.6" width="12" height="17.4" rx="1.6" fill="#e99a1a"/><rect x="19" y="9.6" width="2.4" height="12" fill="#ffc95a"/><rect x="24" y="9.6" width="2.4" height="12" fill="#cf7d10"/><path d="M16,8.2 a2.8,2.8 0 0 1 1.4,-4.8 a4.2,4.2 0 0 1 7.6,-0.8 a3,3 0 0 1 4.4,3.4 a2.4,2.4 0 0 1 -0.8,3.2 H17.4 Z" fill="#fbf3e2"/></g></svg></span>
<span class="t1" id="p2" style="left:23.6px;top:143.4px;font-size:28px;color:#636363">· Rewrite your Elasticsearch queries by using JavaScript</span>
<span class="em2" style="left:746.3px;top:138.2px;width:28.5px;height:35px">🔥<svg viewBox="0 0 32 32" preserveAspectRatio="none"><path d="M17.5,0.5 C19,5 23.5,7.5 25.5,12 C26,10.5 26,9 25.6,7.6 C29.5,11 31,16 30.5,20.5 C29.8,27.5 23.5,32 16,32 C8.5,32 2.4,27.6 1.6,21 C1,16.5 3,12.4 5.6,10.4 C5.6,12.6 6.4,14 7.6,15 C7.6,9.5 11.5,5 17.5,0.5 Z" fill="url(#gfire)"/></svg></span>
<span class="t1" id="p3" style="left:23.6px;top:199.4px;font-size:28px;color:#636363">· How to Improve the Indexing Speed by 200x Times</span>
<span class="em2" style="left:699.5px;top:194.9px;width:32.4px;height:34px">😱<svg viewBox="0 0 32 32" preserveAspectRatio="none"><circle cx="16" cy="14.6" r="14.4" fill="url(#gscr)"/><ellipse cx="10.6" cy="11.6" rx="3.4" ry="3.9" fill="#fff"/><ellipse cx="21.4" cy="11.6" rx="3.4" ry="3.9" fill="#fff"/><circle cx="10.9" cy="11.9" r="1.2" fill="#3a2a1a"/><circle cx="21.1" cy="11.9" r="1.2" fill="#3a2a1a"/><path d="M7,6.8 Q10,4.6 12.6,6.2 M19.4,6.2 Q22,4.6 25,6.8" fill="none" stroke="#5a6b9a" stroke-width="1"/><ellipse cx="16" cy="22.4" rx="3.9" ry="6" fill="#6b3a12"/><ellipse cx="16" cy="26" rx="2.6" ry="2.2" fill="#e8524a"/><path d="M2.2,21 C2.2,17.5 6.4,17 7.8,20 C9.8,20.6 11.4,23 11,26.4 C10.6,30.4 7.4,32.4 4.8,31.6 C2.2,30.8 1.4,27 2.2,21 Z" fill="#fbbf2f" stroke="#e09a1a" stroke-width="0.6"/><path d="M29.8,21 C29.8,17.5 25.6,17 24.2,20 C22.2,20.6 20.6,23 21,26.4 C21.4,30.4 24.6,32.4 27.2,31.6 C29.8,30.8 30.6,27 29.8,21 Z" fill="#fbbf2f" stroke="#e09a1a" stroke-width="0.6"/></svg></span>
<span class="em2" style="left:740.5px;top:196.1px;width:31.4px;height:31px">💥<svg viewBox="0 0 32 32" preserveAspectRatio="none"><polygon points="16,1.5 18.6,10.2 25.5,3.4 23,12 31.5,9.6 24.6,15.6 31,19.6 23.4,19.8 30.5,30.5 20,22.8 18.6,30 15.4,23.2 9.6,31 10.6,22.4 1,24.6 8.6,18.6 0.8,14.2 9.4,13.6 4.6,5 12.6,10.2" fill="url(#gboom)"/></svg></span>
<span class="t1" id="p4" style="left:23.6px;top:255.4px;font-size:28px;color:#636363">· How to manage the Elasticsearch or OpenSearch clusters all together</span>
<span class="em2" style="left:934.0px;top:251.4px;width:32.8px;height:32.4px">😎<svg viewBox="0 0 32 32" preserveAspectRatio="none"><circle cx="16" cy="16" r="15.6" fill="url(#gf)"/><path d="M2,9.4 Q16,7.4 30,9.4 L29.6,12 C29.4,16 27,18 23.4,18 C20,18 18,16 17.4,12.6 Q16,11.8 14.6,12.6 C14,16 12,18 8.6,18 C5,18 2.6,16 2.4,12 Z" fill="#1a1a1a"/><path d="M8.6,22.4 Q16,28.4 23.4,22.4" fill="none" stroke="#6b3a12" stroke-width="1.5" stroke-linecap="round"/></svg></span>
<span class="t1 more" style="left:1308.3px;top:15.7px">...</span>
</div>
<span class="t1" id="h3" style="left:1926px;top:874.3px;font-size:28.4px;font-weight:700;color:#0d0d0d">Platform Activities</span>
<div class="card" style="left:1925px;top:924px;width:1369px;height:1014px">
<span class="t1 more" style="left:1308.3px;top:15.7px">...</span>
<div class="abs" style="left:0;top:0;width:1300px;height:961px;overflow:hidden">
<div class="abs" style="left:32.3px;top:36px;width:4px;height:1000px;background:#e8e8e8"></div>
<div class="dot" style="left:24.3px;top:24.1px"></div>
<span class="t1 ts" id="ts0" style="left:60.0px;top:22.0px">2023-07-04 11:57:19</span>
<span class="t1 tx" id="tx0" style="left:60.6px;top:64.3px">state of node <a>3aaf8ded55ac</a> in cluster <a>opensearch-v131</a></span>
<div class="dot" style="left:24.3px;top:138.1px"></div>
<span class="t1 ts" id="ts1" style="left:60.0px;top:136.0px">2023-07-04 11:57:19</span>
<span class="t1 tx" id="tx1" style="left:60.6px;top:178.3px">health status of node <a>3aaf8ded55ac</a> in cluster <a>opensearch-v131</a> to <b>available</b></span>
<div class="dot" style="left:24.3px;top:252.1px"></div>
<span class="t1 ts" id="ts2" style="left:60.0px;top:250.0px">2023-07-04 11:11:04</span>
<span class="t1 tx" id="tx2" style="left:60.6px;top:292.3px">settings of rule <a style="letter-spacing:0.88px">builtin-calgapp7h710dpnpbeb6</a> was</span>
<div class="dot" style="left:24.3px;top:366.1px"></div>
<span class="t1 ts" id="ts3" style="left:60.0px;top:364.0px">2023-07-04 11:09:47</span>
<span class="t1 tx" id="tx3" style="left:60.6px;top:406.3px">settings of rule <a style="letter-spacing:0.88px">builtin-calgapp7h710dpnpbeb6</a> was</span>
<div class="dot" style="left:24.3px;top:480.1px"></div>
<span class="t1 ts" id="ts4" style="left:60.0px;top:478.0px">2023-07-04 11:07:19</span>
<span class="t1 tx" id="tx4" style="left:60.6px;top:520.3px">state of index <a style="letter-spacing:0.91px">.infini_activities-00001</a> in cluster <a style="letter-spacing:-0.28px">INFINI_SYSTEM (Center)</a></span>
<div class="dot" style="left:24.3px;top:594.1px"></div>
<span class="t1 ts" id="ts5" style="left:60.0px;top:592.0px">2023-07-04 11:07:12</span>
<span class="t1 tx" id="tx5" style="left:60.6px;top:634.3px">settings of rule <a style="letter-spacing:0.88px">builtin-calgapp7h710dpnpbeb6</a> was</span>
<div class="dot" style="left:24.3px;top:708.1px"></div>
<span class="t1 ts" id="ts6" style="left:60.0px;top:706.0px">2023-07-04 11:06:49</span>
<span class="t1 tx" id="tx6" style="left:60.6px;top:748.3px">state of index <a style="letter-spacing:0.6px">.infini_alert-rule</a> in cluster <a style="letter-spacing:-0.24px">INFINI_SYSTEM (Center)</a></span>
<div class="dot" style="left:24.3px;top:822.1px"></div>
<span class="t1 ts" id="ts7" style="left:60.0px;top:820.0px">2023-07-04 11:06:43</span>
<span class="t1 tx" id="tx7" style="left:60.6px;top:862.3px">settings of rule <a style="letter-spacing:0.88px">builtin-calgapp7h710dpnpbeb6</a> was</span>
<div class="dot" style="left:24.3px;top:936.1px"></div>
<span class="t1 ts" id="ts8" style="left:60.0px;top:934.0px">2023-07-04 10:40:49</span>
</div></div>
<!--MORE-->
</div>
</body>
</html>
